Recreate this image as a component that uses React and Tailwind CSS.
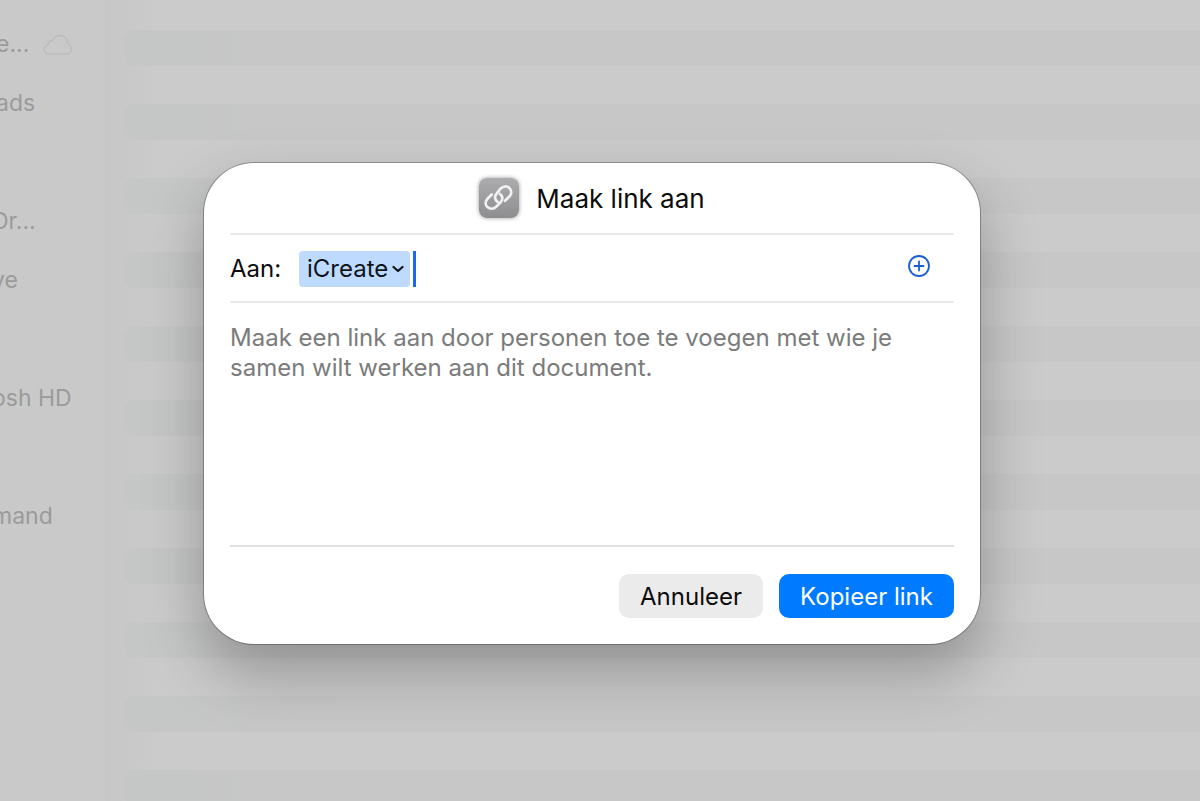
import { useState } from 'react'
import { clsx } from 'clsx'

const sidebarItems = [
  { label: 'e...', cloud: true },
  { label: 'ads' },
  null,
  { label: 'Dr...', cut: true },
  { label: 've', cut: true },
  null,
  { label: 'osh HD', cut: true },
  null,
  { label: 'mand', cut: true },
]

const rows = Array.from({ length: 11 }, (_, i) => i)

function CloudIcon() {
  return (
    <svg viewBox="0 0 30 22" className="h-[22px] w-[30px] shrink-0" fill="none" stroke="#bdbdbd" strokeWidth="1.6" strokeLinejoin="round" aria-hidden="true">
      <path d="M6.500 20.300C3.300 20.300 1.200 18.300 1.200 15.600c0-2.300 1.500-3.900 3.600-4.400C5 8.300 7 6.300 9.800 6.100 11.200 3 13.800 1.400 17 1.400c4 0 6.900 2.900 7.300 6.900.2 1 .8 1.700 1.700 2.400 1.700 1.200 2.600 2.500 2.600 4.200 0 3.200-2.400 5.400-5.900 5.400z" />
    </svg>
  )
}

function LinkTile() {
  return (
    <span className="flex h-10 w-10 items-center justify-center rounded-lg bg-linear-to-b from-[#acacae] to-[#8e8e91] shadow-[0_0_4px_rgba(0,0,0,0.4)]">
      <svg viewBox="0 0 40 40" className="h-10 w-10" fill="none" stroke="#f1f1f3" strokeWidth="2.7" strokeLinecap="round" aria-hidden="true">
        <path d="M18.500 23.800C15.600 21.800 15.200 18.200 17.600 15.700L21.500 10.700C24.200 8 27.700 7.700 30.300 10C33 12.500 32.900 16.100 30.400 18.600L26 22.800" />
        <path d="M20.800 15.900C23.800 17.900 24.200 21.500 21.800 24L17.200 28.700C14.500 31.300 11 31.400 8.500 29.100C6 26.600 6.100 23.200 8.500 20.700L12.700 16.500" />
      </svg>
    </span>
  )
}

function Sidebar() {
  return (
    <aside className="w-[106px] shrink-0 overflow-hidden border-r border-[#c7c7c7] bg-[#c9c9c9] pt-[15px]">
      <ul>
        {sidebarItems.map((item, i) => (
          <li
            key={i}
            className={clsx(
              'flex h-[59px] items-center gap-3.5 text-[23px] whitespace-nowrap text-[#9b9b9b]',
              item?.cut ? '-ml-2' : '-ml-1'
            )}
          >
            {item?.label}
            {item?.cloud && <CloudIcon />}
          </li>
        ))}
      </ul>
    </aside>
  )
}

function ShareDialog() {
  const [recipient, setRecipient] = useState('')

  return (
    <form
      role="dialog"
      aria-labelledby="dialog-title"
      onSubmit={(e) => e.preventDefault()}
      className="w-full max-w-[776px] rounded-[50px] bg-white px-[26px] pb-[26px] shadow-[0_0_0_1px_rgba(0,0,0,0.28),0_28px_60px_rgba(0,0,0,0.28)]"
    >
      <header className="flex h-[72px] items-center justify-center gap-[17px] border-b-2 border-[#e8e8e8]">
        <LinkTile />
        <h1 id="dialog-title" className="pt-0.5 text-[26px] leading-8 text-[#0c0c0c]">Maak link aan</h1>
      </header>

      <div className="flex h-[68px] items-center border-b-2 border-[#e8e8e8] pt-0.5">
        <label htmlFor="recipient" className="w-[69px] text-2xl text-[#0c0c0c]">Aan:</label>
        <button type="button" className="flex h-9 items-center gap-1 rounded-sm bg-[#bedbff] pr-1.5 pl-2 text-2xl text-[#10151c]">
          iCreate
          <svg viewBox="0 0 12 8" className="h-2 w-3" fill="none" stroke="currentColor" strokeWidth="2.2" strokeLinecap="round" strokeLinejoin="round" aria-hidden="true">
            <path d="M1.500 2 6 6l4.500-4" />
          </svg>
        </button>
        <span className="ml-[3px] h-9 w-[3px] bg-[#1768f5]" />
        <input
          id="recipient"
          value={recipient}
          onChange={(e) => setRecipient(e.target.value)}
          className="min-w-0 flex-1 bg-transparent px-1 text-2xl outline-none"
        />
        <button type="button" aria-label="Voeg persoon toe" className="mr-6 pb-1.5">
          <svg viewBox="0 0 22 22" className="h-[22px] w-[22px]" fill="none" stroke="#1a5fd0" strokeWidth="1.8" strokeLinecap="round" aria-hidden="true">
            <circle cx="11" cy="11" r="10" />
            <path d="M11 6.500v9M6.500 11h9" />
          </svg>
        </button>
      </div>

      <div className="h-[244px] border-b-2 border-[#e3e3e3] pt-5">
        <p className="max-w-[680px] text-2xl leading-[30px] text-[#7b7b7b]">
          Maak een link aan door personen toe te voegen met wie je samen wilt werken aan dit document.
        </p>
      </div>

      <footer className="flex justify-end gap-4 pt-[27px]">
        <button type="button" className="h-11 w-36 rounded-[10px] bg-[#ebebeb] pt-0.5 text-2xl text-[#0c0c0c]">Annuleer</button>
        <button type="submit" className="h-11 w-[175px] rounded-[10px] bg-[#007aff] pt-0.5 text-2xl text-white">Kopieer link</button>
      </footer>
    </form>
  )
}

export default function App() {
  return (
    <div className="relative h-screen overflow-hidden bg-[#cbcbcb] font-['Inter',sans-serif]">
      <div className="flex h-full">
        <Sidebar />
        <main className="flex min-w-0 flex-1 flex-col gap-[38px] overflow-hidden bg-linear-to-r from-[#c7c7c7] to-[#cbcbcb] to-5% pt-[30px] pl-[18px]">
          {rows.map((row) => (
            <div key={row} className="h-9 shrink-0 rounded-l-[10px] bg-linear-to-r from-[#c5c6c6] to-[#c7c7c7] to-20%" />
          ))}
        </main>
      </div>
      <div className="absolute inset-0 flex items-center justify-center pt-1.5 pr-4">
        <ShareDialog />
      </div>
    </div>
  )
}
